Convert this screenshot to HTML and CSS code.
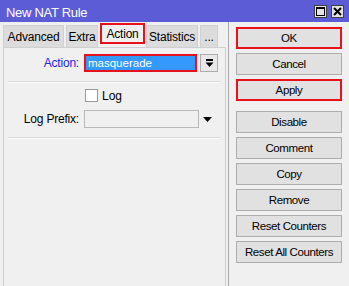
FILE: index.html
```html
<!DOCTYPE html>
<html>
<head>
<meta charset="utf-8">
<link rel="stylesheet" href="styles.css">
</head>
<body>
<div class="window">
  <div class="titlebar">
    <span class="title">New NAT Rule</span>
    <div class="winbtns">
      <span class="winbtn"><svg width="11" height="11" viewBox="0 0 11 11"><rect x="1.5" y="1.5" width="8" height="8" fill="none" stroke="#000" stroke-width="1"/><rect x="1" y="1" width="9" height="2" fill="#000"/></svg></span>
      <span class="winbtn"><svg width="11" height="11" viewBox="0 0 11 11"><path d="M2 2 L9 9 M9 2 L2 9" stroke="#000" stroke-width="2"/></svg></span>
    </div>
  </div>
  <div class="body">
    <div class="left">
      <div class="tabs">
        <div class="tab tab-adv">Advanced</div>
        <div class="tab tab-extra">Extra</div>
        <div class="tab tab-action active">Action</div>
        <div class="tab tab-stats">Statistics</div>
        <div class="tab tab-more">...</div>
      </div>
      <div class="panel">
        <div class="row row-action">
          <label class="lbl lbl-blue">Action:</label>
          <div class="combo selected">masquerade</div>
          <div class="dropbtn"><svg width="9" height="9" viewBox="0 0 9 9"><rect x="1" y="0" width="7" height="2" fill="#000"/><path d="M0.5 3.5 L8.5 3.5 L4.5 8 Z" fill="#000"/></svg></div>
        </div>
        <div class="sep"></div>
        <div class="row row-check">
          <span class="checkbox"></span>
          <span class="checklbl">Log</span>
        </div>
        <div class="row row-prefix">
          <label class="lbl">Log Prefix:</label>
          <div class="combo disabled"></div>
          <svg class="tri" width="9" height="5" viewBox="0 0 9 5"><path d="M0 0 L9 0 L4.5 5 Z" fill="#000"/></svg>
        </div>
        <div class="sep"></div>
      </div>
    </div>
    <div class="right">
      <div class="btn marked">OK</div>
      <div class="btn">Cancel</div>
      <div class="btn marked">Apply</div>
      <div class="btn spaced">Disable</div>
      <div class="btn">Comment</div>
      <div class="btn">Copy</div>
      <div class="btn">Remove</div>
      <div class="btn">Reset Counters</div>
      <div class="btn">Reset All Counters</div>
    </div>
  </div>
</div>
</body>
</html>
```
FILE: styles.css
```css
* { box-sizing: border-box; }
html, body { margin: 0; padding: 0; }
body {
  font-family: "Liberation Sans", Arial, sans-serif;
  font-size: 11px;
  color: #000;
  background: #f0f0f0;
}
.window {
  width: 349px;
  height: 286px;
  display: flex;
  flex-direction: column;
  background: #f0f0f0;
  overflow: hidden;
}
.titlebar {
  height: 22px;
  background: #5c5cd6;
  color: #fff;
  display: flex;
  align-items: center;
  justify-content: space-between;
  padding: 0 5px 0 6px;
}
.title { font-size: 13px; letter-spacing: -0.3px; position: relative; top: 1px; }
.winbtns { display: flex; gap: 4px; }
.winbtn {
  width: 13px;
  height: 13px;
  background: #e4e4e4;
  border: 1px solid #404040;
  display: flex;
  align-items: center;
  justify-content: center;
}
.winbtn svg { display: block; }
.body { flex: 1; display: flex; }
.left {
  width: 229px;
  padding-left: 3px;
  border-right: 1px solid #a9a9a9;
  display: flex;
  flex-direction: column;
}
.tabs {
  display: flex;
  height: 24px;
  margin-top: 1px;
  align-items: flex-end;
}
.tab {
  height: 22px;
  margin-right: 2px;
  background: #dcdcdc;
  border: 1px solid #d0d0d0;
  border-bottom: none;
  display: flex;
  align-items: center;
  justify-content: center;
  font-size: 12px;
  letter-spacing: -0.2px;
}
.tab-adv { width: 61px; }
.tab-extra { width: 32px; }
.tab-action { width: 45px; margin-right: 1px; }
.tab-stats { width: 52px; }
.tab-more { width: 18px; }
.tab.active {
  height: 21px;
  align-self: flex-start;
  background: #f0f0f0;
  border: 2px solid #e8101a;
}
.panel {
  flex: 1;
  width: 223px;
  border: 1px solid #cfcfcf;
  border-bottom: none;
  padding-top: 6px;
}
.row { display: flex; align-items: center; }
.lbl {
  width: 75px;
  text-align: right;
  margin-right: 5px;
  font-size: 12px;
  letter-spacing: -0.2px;
}
.lbl-blue { color: #2424e0; }
.row-action { height: 18px; }
.combo {
  height: 18px;
  width: 113px;
  border: 1px solid #b9b9b9;
  background: #f0f0f0;
}
.combo.selected {
  background: #3399ff;
  color: #fff;
  border: 2px solid #e8101a;
  padding-left: 2px;
  line-height: 14px;
  font-size: 11.5px;
}
.dropbtn {
  width: 18px;
  height: 18px;
  margin-left: 3px;
  background: #e8e8e8;
  border: 1px solid #adadad;
  display: flex;
  align-items: center;
  justify-content: center;
}
.dropbtn svg { display: block; }
.sep {
  height: 2px;
  margin: 9px 4px 0 4px;
  border-top: 1px solid #dadada;
  border-bottom: 1px solid #fbfbfb;
}
.row-check { height: 13px; margin-top: 6px; padding-left: 81px; }
.checkbox {
  width: 13px;
  height: 13px;
  background: #fff;
  border: 1px solid #9a9a9a;
}
.checklbl { margin-left: 4px; font-size: 12px; }
.row-prefix { height: 18px; margin-top: 8px; }
.row-prefix .combo { width: 115px; height: 18px; }
.tri { margin-left: 4px; display: block; }
.right {
  flex: 1;
  padding: 5px 0 0 7px;
  display: flex;
  flex-direction: column;
  gap: 4px;
}
.btn {
  width: 106px;
  height: 22px;
  background: #e1e1e1;
  border: 1px solid #adadad;
  display: flex;
  align-items: center;
  justify-content: center;
  font-size: 11.5px;
  letter-spacing: -0.4px;
}
.btn.marked { border: 2px solid #e8101a; }
.btn.spaced { margin-top: 6px; }
```
